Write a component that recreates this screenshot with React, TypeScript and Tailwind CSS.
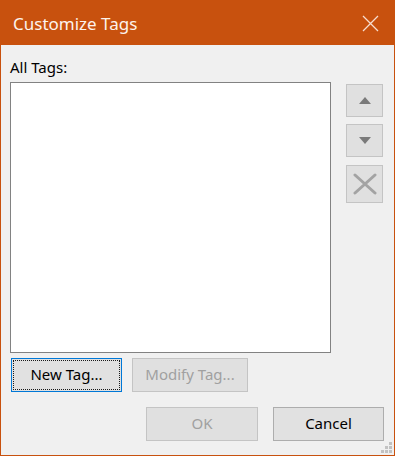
import React from 'react';

const font = { fontFamily: '"Noto Sans", "Open Sans", sans-serif' };

const Btn = ({
  label,
  disabled,
  focused,
  className = '',
}: {
  label: string;
  disabled?: boolean;
  focused?: boolean;
  className?: string;
}) => {
  if (focused) {
    return (
      <button className={`h-[34px] border border-[#0078d7] bg-[#e1e1e1] p-[1px] ${className}`}>
        <span className="flex h-full w-full items-center justify-center border border-dotted border-[#1a1a1a] pb-[2px] text-[15px] text-black">
          {label}
        </span>
      </button>
    );
  }
  return (
    <button
      disabled={disabled}
      className={`flex h-[34px] items-center justify-center border pb-[2px] text-[15px] ${
        disabled
          ? 'border-[#c4c4c4] bg-[#e0e0e0] text-[#a0a0a0]'
          : 'border-[#adadad] bg-[#e1e1e1] text-black'
      } ${className}`}
    >
      {label}
    </button>
  );
};

const App = () => {
  return (
    <div className="h-[466px] w-[414px] bg-white" style={font}>
      <div className="relative flex h-[456px] w-[395px] flex-col border border-[#c8510e] bg-[#f0f0f0]">
        {/* Title bar */}
        <div className="flex h-[44px] items-center justify-between bg-[#c8510e] pl-[12px] pr-[15px]">
          <span className="text-[17px] leading-none text-[#fdf3ec]">Customize Tags</span>
          <svg width="17" height="17" viewBox="0 0 17 17" className="mt-[1px]">
            <path d="M1 1L16 16M16 1L1 16" stroke="#f7ddd0" strokeWidth="1.3" />
          </svg>
        </div>

        {/* Body */}
        <div className="flex flex-col pl-[9px] pt-[12px]">
          <div className="h-[25px] text-[15px] leading-[20px] text-black">All Tags:</div>
          <div className="flex gap-[15px]">
            <div className="h-[271px] w-[321px] border border-[#828282] bg-white" />
            <div className="flex flex-col gap-[7px] pt-[2px]">
              <button className="flex h-[33px] w-[37px] items-center justify-center border border-[#c4c4c4] bg-[#e0e0e0]">
                <svg width="12" height="7" viewBox="0 0 12 7">
                  <path d="M6 0L12 7H0Z" fill="#7a7a7a" />
                </svg>
              </button>
              <button className="flex h-[33px] w-[37px] items-center justify-center border border-[#c4c4c4] bg-[#e0e0e0]">
                <svg width="12" height="7" viewBox="0 0 12 7">
                  <path d="M0 0H12L6 7Z" fill="#7a7a7a" />
                </svg>
              </button>
              <button className="mt-[1px] flex h-[38px] w-[37px] items-center justify-center border border-[#c4c4c4] bg-[#e0e0e0]">
                <svg width="24" height="22" viewBox="0 0 24 22">
                  <path d="M2 2L22 20M22 2L2 20" stroke="#a3a3a3" strokeWidth="3" strokeLinecap="round" />
                </svg>
              </button>
            </div>
          </div>

          <div className="mt-[5px] flex gap-[10px] pl-[1px]">
            <Btn label="New Tag..." focused className="w-[111px]" />
            <Btn label="Modify Tag..." disabled className="w-[116px]" />
          </div>

          <div className="mt-[15px] flex justify-end gap-[15px] pr-[10px]">
            <Btn label="OK" disabled className="w-[112px]" />
            <Btn label="Cancel" className="w-[111px]" />
          </div>
        </div>

        {/* Resize grip */}
        <div className="absolute bottom-[2px] right-[2px] grid grid-cols-3 gap-[1px]">
          <span className="h-[3px] w-[3px]" />
          <span className="h-[3px] w-[3px]" />
          <span className="h-[3px] w-[3px] bg-[#c2c2c2]" />
          <span className="h-[3px] w-[3px]" />
          <span className="h-[3px] w-[3px] bg-[#c2c2c2]" />
          <span className="h-[3px] w-[3px] bg-[#c2c2c2]" />
          <span className="h-[3px] w-[3px] bg-[#c2c2c2]" />
          <span className="h-[3px] w-[3px] bg-[#c2c2c2]" />
          <span className="h-[3px] w-[3px] bg-[#c2c2c2]" />
        </div>
      </div>
    </div>
  );
};

export default App;
